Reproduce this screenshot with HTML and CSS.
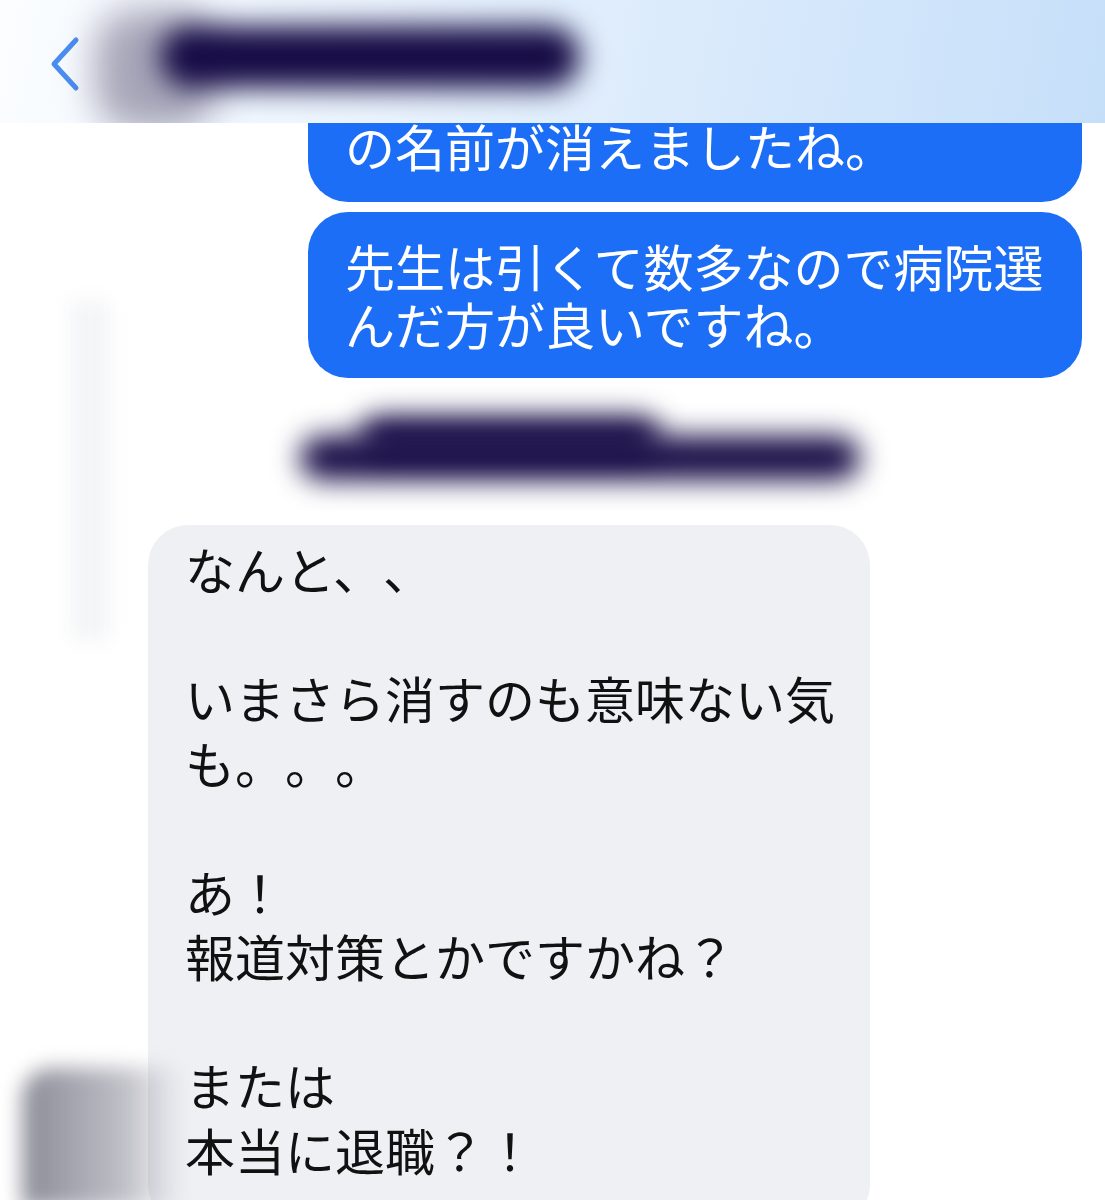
FILE: index.html
```html
<!DOCTYPE html>
<html lang="ja">
<head>
    <meta charset="UTF-8">
    <title>メッセージ</title>
    <link rel="stylesheet" href="styles.css">
</head>
<body>
    <div class="screen">
        <header class="nav-bar">
            <svg class="back-icon" width="34" height="60" viewBox="0 0 34 60">
                <path d="M28 6 L6 30 L28 54" fill="none" stroke="#4a8ef2" stroke-width="5" stroke-linecap="round" stroke-linejoin="round"/>
            </svg>
            <div class="smudge smudge-title-tail"></div>
            <div class="smudge smudge-title"></div>
        </header>

        <div class="thread">
            <div class="bubble sent first">の名前が消えましたね。</div>
            <div class="bubble sent">先生は引くて数多なので病院選<br>んだ方が良いですね。</div>

            <div class="stamp-row">
                <div class="smudge smudge-time"></div>
                <div class="smudge smudge-time-hump"></div>
            </div>

            <div class="bubble received">なんと、、<br><br>いまさら消すのも意味ない気<br>も。。。<br><br>あ！<br>報道対策とかですかね？<br><br>または<br>本当に退職？！</div>
        </div>

        <div class="ghost ghost-left"></div>
        <div class="ghost ghost-avatar"></div>
    </div>
</body>
</html>
```

FILE: styles.css
```css
* {
    margin: 0;
    padding: 0;
    box-sizing: border-box;
}

body {
    background: #ffffff;
    font-family: "Noto Sans CJK JP", sans-serif;
    color: #111111;
    overflow: hidden;
}

.screen {
    position: relative;
    width: 1105px;
    height: 1200px;
    overflow: hidden;
}

/* barra superior translúcida */
.nav-bar {
    position: absolute;
    top: 0;
    left: 0;
    right: 0;
    height: 123px;
    background: linear-gradient(100deg, #fbfdff 0%, #eaf3fd 35%, #d6e8fb 70%, #c6dff9 100%);
    z-index: 5;
    overflow: hidden;
}

.back-icon {
    position: absolute;
    left: 48px;
    top: 34px;
}

.smudge {
    position: absolute;
    background: #160b45;
    border-radius: 40px;
}

.smudge-title {
    left: 160px;
    top: 26px;
    width: 420px;
    height: 62px;
    filter: blur(14px);
}

.smudge-title-tail {
    left: 95px;
    top: 10px;
    width: 120px;
    height: 120px;
    background: rgba(50, 40, 80, 0.4);
    filter: blur(18px);
}

.thread {
    display: flex;
    flex-direction: column;
    padding: 40px 0 0;
}

.bubble {
    font-size: 50px;
    text-spacing-trim: space-all;
    border-radius: 40px;
}

.sent {
    align-self: flex-end;
    width: 774px;
    margin-right: 23px;
    margin-bottom: 10px;
    background: #1b6ef5;
    color: #ffffff;
    line-height: 58px;
    padding: 24px 30px 26px 37px;
}

.sent.first {
    padding-top: 76px;
    padding-bottom: 28px;
}

.stamp-row {
    position: relative;
    height: 137px;
}

.smudge-time {
    left: 300px;
    top: 48px;
    width: 560px;
    height: 44px;
    filter: blur(14px);
}

.smudge-time-hump {
    left: 360px;
    top: 28px;
    width: 300px;
    height: 40px;
    filter: blur(14px);
}

.received {
    align-self: flex-start;
    width: 722px;
    margin-left: 148px;
    background: #eff0f4;
    line-height: 64.5px;
    padding: 11px 30px 40px 37px;
    min-height: 700px;
}

.ghost {
    position: absolute;
    filter: blur(10px);
}

.ghost-left {
    left: 70px;
    top: 300px;
    width: 40px;
    height: 340px;
    background: rgba(200, 205, 215, 0.2);
}

.ghost-avatar {
    left: 22px;
    top: 1068px;
    width: 160px;
    height: 140px;
    border-radius: 30px 0 0 0;
    background: linear-gradient(90deg, rgba(110, 110, 125, 0.8), rgba(140, 140, 155, 0.55) 65%, rgba(200, 200, 210, 0));
}
```
